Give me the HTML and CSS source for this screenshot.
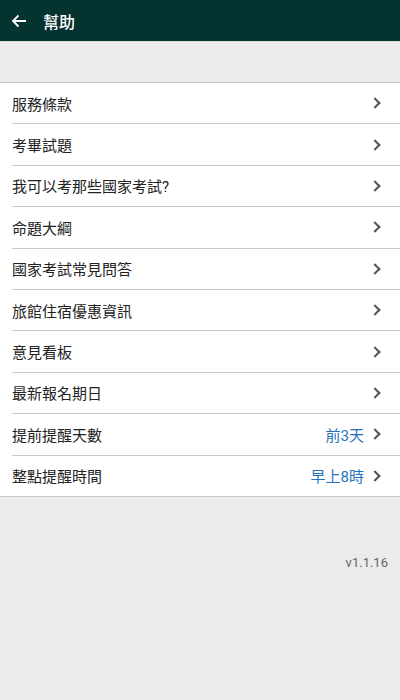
FILE: index.html
```html
<!DOCTYPE html>
<html lang="zh-Hant">
<head>
    <meta charset="UTF-8">
    <meta name="viewport" content="width=device-width, initial-scale=1.0">
    <title>幫助</title>
    <link rel="stylesheet" href="styles.css">
</head>
<body>

    <header class="toolbar">
        <svg class="back" width="16" height="14" viewBox="0 0 16 14">
            <path d="M15 7H2M7.5 1.5L2 7l5.5 5.5" fill="none" stroke="#fff" stroke-width="1.8"/>
        </svg>
        <h1>幫助</h1>
    </header>

    <div class="spacer"></div>

    <!-- Help menu list -->
    <ul class="menu">
        <li class="item"><span>服務條款</span><i class="chev"></i></li>
        <li class="item"><span>考畢試題</span><i class="chev"></i></li>
        <li class="item"><span>我可以考那些國家考試?</span><i class="chev"></i></li>
        <li class="item"><span>命題大綱</span><i class="chev"></i></li>
        <li class="item"><span>國家考試常見問答</span><i class="chev"></i></li>
        <li class="item"><span>旅館住宿優惠資訊</span><i class="chev"></i></li>
        <li class="item"><span>意見看板</span><i class="chev"></i></li>
        <li class="item"><span>最新報名期日</span><i class="chev"></i></li>
        <li class="item"><span>提前提醒天數</span><em class="value">前3天</em><i class="chev"></i></li>
        <li class="item"><span>整點提醒時間</span><em class="value">早上8時</em><i class="chev"></i></li>
    </ul>

    <p class="version">v1.1.16</p>

</body>
</html>
```

FILE: styles.css
```css
body {
    margin: 0;
    font-family: Roboto, "Noto Sans CJK TC", sans-serif;
    background-color: #ebebeb;
    color: #222;
}

.toolbar {
    height: 41px;
    background-color: #053330;
    display: flex;
    align-items: center;
    padding-left: 11px;
    border-bottom: 1px solid #d8d8d8;
}

.toolbar h1 {
    margin: 0 0 0 16px;
    font-size: 16px;
    font-weight: 500;
    color: #fff;
}

.back {
    display: block;
}

.spacer {
    height: 40px;
}

.menu {
    list-style: none;
    margin: 0;
    padding: 0 0 0 12px;
    background: #fff;
    border-top: 1px solid #c8c8c8;
    border-bottom: 1px solid #c8c8c8;
}

.item {
    height: 40.4px;
    display: flex;
    align-items: center;
    font-size: 15px;
    border-bottom: 1px solid #c8c8c8;
}

.item:last-child {
    border-bottom: none;
}

.item span {
    flex: 1;
}

.value {
    font-style: normal;
    color: #1f72bb;
    margin-right: 7px;
}

.chev {
    width: 6px;
    height: 6px;
    border-top: 2px solid #555;
    border-right: 2px solid #555;
    transform: rotate(45deg);
    margin-right: 21px;
}

.version {
    margin: 58px 12px 0 0;
    text-align: right;
    font-size: 13px;
    color: #666;
}
```
